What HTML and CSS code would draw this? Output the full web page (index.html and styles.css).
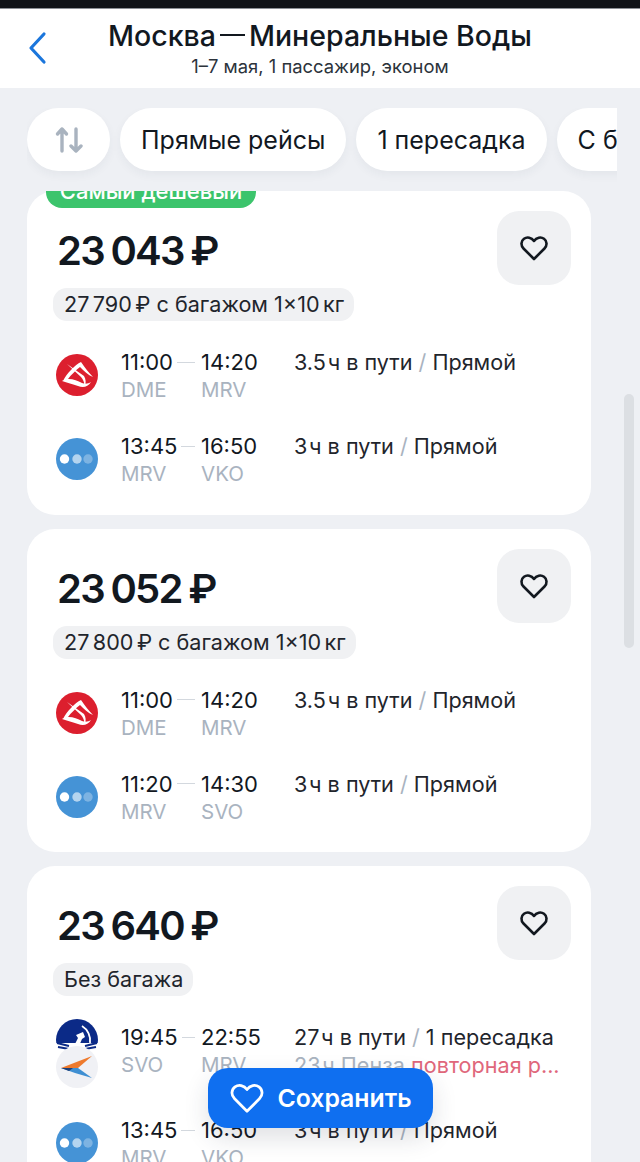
FILE: index.html
```html
<!DOCTYPE html>
<html lang="ru">
<head>
  <meta charset="UTF-8" />
  <meta name="viewport" content="width=device-width, initial-scale=1.0" />
  <title>Москва — Минеральные Воды</title>
  <link rel="stylesheet" href="styles.css">
</head>
<body>
  <div class="topbar"></div>
  <header class="header">
    <svg class="back" width="22" height="34" viewBox="0 0 22 34"><path d="M17 3 L4 17 L17 31" fill="none" stroke="#1b76dc" stroke-width="3.2" stroke-linecap="round" stroke-linejoin="round"/></svg>
    <div class="title"><span>Москва</span><i class="title-dash"></i><span>Минеральные Воды</span></div>
    <div class="subtitle">1–7 мая, 1 пассажир, эконом</div>
  </header>

  <div class="filters">
    <div class="chip chip-sort">
      <svg width="28" height="28" viewBox="0 0 28 28" fill="none" stroke="#a9b3bf" stroke-width="3.4" stroke-linecap="round" stroke-linejoin="round"><path d="M7 25V3M2.500 8 7 3l4.500 5"/><path d="M21 3v22M16 20l5 5 5-5"/></svg>
    </div>
    <div class="chip">Прямые рейсы</div>
    <div class="chip">1 пересадка</div>
    <div class="chip">С багажом</div>
  </div>

  <main class="list">
    <section class="card">
      <div class="badge">Самый дешевый</div>
      <div class="price">23<i class="thin"></i>043<i class="thin"></i>₽</div>
      <button class="fav"><svg width="30" height="28" viewBox="0 0 30 28"><path d="M15 25 4.500 14.500C1.500 11.500 2 7 5 4.800 8 2.600 12.500 3.300 15 7c2.500-3.700 7-4.400 10-2.200 3 2.200 3.500 6.700.5 9.700Z" fill="none" stroke="#12181f" stroke-width="2.600" stroke-linejoin="round"/></svg></button>
      <div class="baggage">27<i class="thin"></i>790<i class="thin"></i>₽ с багажом 1×10<i class="thin"></i>кг</div>
      <div class="flight">
        <svg class="logo" viewBox="0 0 42 42"><circle cx="21" cy="21" r="21" fill="#dc1f2e"/><path d="M7 27C11 19 19 11 25 8c4 6 8 11 12 15-5-2-9-6-13-10-4 3-9 8-12 12ZM6 27c6-4 14-1 20 2 3 1 6 1 9-1-3 5-8 6-13 4-5-2-11-3-16-5ZM11 10l17 12c2 3 2 7 1 10-1-4-2-7-4-9Z" fill="#fff"/></svg>
        <div class="leg"><div class="time">11:00<i class="dash"></i></div><div class="code">DME</div></div>
        <div class="leg"><div class="time">14:20</div><div class="code">MRV</div></div>
        <div class="info">3.5<i class="thin"></i>ч в пути <span class="slash">/</span> Прямой</div>
      </div>
      <div class="flight">
        <svg class="logo" viewBox="0 0 42 42"><circle cx="21" cy="21" r="21" fill="#4593d6"/><circle cx="8.500" cy="21" r="4.700" fill="#fff"/><circle cx="21" cy="21" r="4.700" fill="#fff" fill-opacity=".6"/><circle cx="32" cy="21" r="4.700" fill="#fff" fill-opacity=".3"/></svg>
        <div class="leg"><div class="time">13:45<i class="dash"></i></div><div class="code">MRV</div></div>
        <div class="leg"><div class="time">16:50</div><div class="code">VKO</div></div>
        <div class="info">3<i class="thin"></i>ч в пути <span class="slash">/</span> Прямой</div>
      </div>
    </section>

    <section class="card">
      <div class="price">23<i class="thin"></i>052<i class="thin"></i>₽</div>
      <button class="fav"><svg width="30" height="28" viewBox="0 0 30 28"><path d="M15 25 4.500 14.500C1.500 11.500 2 7 5 4.800 8 2.600 12.500 3.300 15 7c2.500-3.700 7-4.400 10-2.200 3 2.200 3.500 6.700.5 9.700Z" fill="none" stroke="#12181f" stroke-width="2.600" stroke-linejoin="round"/></svg></button>
      <div class="baggage">27<i class="thin"></i>800<i class="thin"></i>₽ с багажом 1×10<i class="thin"></i>кг</div>
      <div class="flight">
        <svg class="logo" viewBox="0 0 42 42"><circle cx="21" cy="21" r="21" fill="#dc1f2e"/><path d="M7 27C11 19 19 11 25 8c4 6 8 11 12 15-5-2-9-6-13-10-4 3-9 8-12 12ZM6 27c6-4 14-1 20 2 3 1 6 1 9-1-3 5-8 6-13 4-5-2-11-3-16-5ZM11 10l17 12c2 3 2 7 1 10-1-4-2-7-4-9Z" fill="#fff"/></svg>
        <div class="leg"><div class="time">11:00<i class="dash"></i></div><div class="code">DME</div></div>
        <div class="leg"><div class="time">14:20</div><div class="code">MRV</div></div>
        <div class="info">3.5<i class="thin"></i>ч в пути <span class="slash">/</span> Прямой</div>
      </div>
      <div class="flight">
        <svg class="logo" viewBox="0 0 42 42"><circle cx="21" cy="21" r="21" fill="#4593d6"/><circle cx="8.500" cy="21" r="4.700" fill="#fff"/><circle cx="21" cy="21" r="4.700" fill="#fff" fill-opacity=".6"/><circle cx="32" cy="21" r="4.700" fill="#fff" fill-opacity=".3"/></svg>
        <div class="leg"><div class="time">11:20<i class="dash"></i></div><div class="code">MRV</div></div>
        <div class="leg"><div class="time">14:30</div><div class="code">SVO</div></div>
        <div class="info">3<i class="thin"></i>ч в пути <span class="slash">/</span> Прямой</div>
      </div>
    </section>

    <section class="card">
      <div class="price">23<i class="thin"></i>640<i class="thin"></i>₽</div>
      <button class="fav"><svg width="30" height="28" viewBox="0 0 30 28"><path d="M15 25 4.500 14.500C1.500 11.500 2 7 5 4.800 8 2.600 12.500 3.300 15 7c2.500-3.700 7-4.400 10-2.200 3 2.200 3.500 6.700.5 9.700Z" fill="none" stroke="#12181f" stroke-width="2.600" stroke-linejoin="round"/></svg></button>
      <div class="baggage">Без багажа</div>
      <div class="flight flight-double">
        <div class="logos">
          <svg class="logo" viewBox="0 0 42 42"><circle cx="21" cy="21" r="21" fill="#0b2a87"/><path d="M0 24h42v18H0Z" fill="#fff"/><path d="M1 24l12 3M2 28l11 2M41 24l-12 3M40 28l-11 2" stroke="#0b2a87" stroke-width="2"/><path d="M26 7a17 17 0 0 1 8 17" fill="none" stroke="#fff" stroke-width="1.800"/><path d="M27 13l-7 3 2 3-4 8h5l3-7 3-2Z" fill="#fff"/></svg>
          <svg class="logo logo-over" viewBox="0 0 42 42"><circle cx="21" cy="21" r="21" fill="#f0f1f5"/><path d="M5 22 36 10 22 22Z" fill="#ee7a2d"/><path d="M5 22h17l14 10-17-5Z" fill="#3f8fd2"/><path d="M5 22h12l-4 3Z" fill="#1d3f78"/></svg>
        </div>
        <div class="leg"><div class="time">19:45<i class="dash"></i></div><div class="code">SVO</div></div>
        <div class="leg"><div class="time">22:55</div><div class="code">MRV</div></div>
        <div class="info-wrap">
          <div class="info">27<i class="thin"></i>ч в пути <span class="slash">/</span> 1 пересадка</div>
          <div class="stop">23<i class="thin"></i>ч Пенза <span class="warn">повторная р...</span></div>
        </div>
      </div>
      <div class="flight">
        <svg class="logo" viewBox="0 0 42 42"><circle cx="21" cy="21" r="21" fill="#4593d6"/><circle cx="8.500" cy="21" r="4.700" fill="#fff"/><circle cx="21" cy="21" r="4.700" fill="#fff" fill-opacity=".6"/><circle cx="32" cy="21" r="4.700" fill="#fff" fill-opacity=".3"/></svg>
        <div class="leg"><div class="time">13:45<i class="dash"></i></div><div class="code">MRV</div></div>
        <div class="leg"><div class="time">16:50</div><div class="code">VKO</div></div>
        <div class="info">3<i class="thin"></i>ч в пути <span class="slash">/</span> Прямой</div>
      </div>
    </section>
  </main>

  <div class="scrollbar"></div>

  <button class="save">
    <svg width="36" height="34" viewBox="0 0 30 28"><path d="M15 25 4.500 14.500C1.500 11.500 2 7 5 4.800 8 2.600 12.500 3.300 15 7c2.500-3.700 7-4.400 10-2.200 3 2.200 3.500 6.700.5 9.700Z" fill="none" stroke="#fff" stroke-width="2.300" stroke-linejoin="round"/></svg>
    Сохранить
  </button>
</body>
</html>
```

FILE: styles.css
```css
body {
  font-family: Inter, "Noto Sans", sans-serif;
  background-color: #eef0f4;
  color: #12181f;
  margin: 0;
  height: 1162px;
  overflow: hidden;
  position: relative;
  display: flex;
  flex-direction: column;
}
.topbar {
  height: 8px;
  background-color: #101318;
  border-bottom: 1px solid #8c9096;
  flex: none;
}
.header {
  height: 79px;
  background-color: #fff;
  position: relative;
  text-align: center;
  flex: none;
}
.back {
  position: absolute;
  left: 27px;
  top: 22px;
}
.title {
  font-size: 28.5px;
  line-height: 34px;
  font-weight: 500;
  padding-top: 10px;
  display: flex;
  justify-content: center;
  align-items: center;
}
.title-dash {
  width: 25px;
  height: 1.5px;
  background-color: #12181f;
  margin: 0 4px 2px;
}
.subtitle {
  font-size: 18.4px;
  line-height: 22px;
  color: #2c333b;
  margin-top: 2px;
}
.filters {
  display: flex;
  gap: 10px;
  margin: 20px 23px 0 27px;
  padding-bottom: 20px;
  overflow: hidden;
  flex: none;
}
.chip {
  height: 63px;
  padding: 0 21px;
  border-radius: 32px;
  background-color: #fff;
  font-size: 25px;
  display: flex;
  align-items: center;
  white-space: nowrap;
  flex: none;
  box-shadow: 0 4px 10px rgba(40, 50, 70, 0.05);
}
.chip-sort {
  width: 83px;
  box-sizing: border-box;
  padding: 0;
  justify-content: center;
}
.list {
  flex: 1;
  overflow: hidden;
  padding: 0 49px 0 27px;
  display: flex;
  flex-direction: column;
  gap: 14px;
}
.card {
  background-color: #fff;
  border-radius: 28px;
  padding: 37px 30px 0 30px;
  position: relative;
  height: 286.5px;
  flex: none;
}
.badge {
  position: absolute;
  left: 19px;
  top: -14px;
  height: 31px;
  width: 210px;
  background-color: #3cc46c;
  color: #fff;
  font-size: 22px;
  font-weight: 500;
  line-height: 28px;
  text-align: center;
  border-radius: 0 0 16px 16px;
}
.price {
  font-size: 40px;
  line-height: 46px;
  font-weight: 600;
  letter-spacing: -1.7px;
}
.thin {
  display: inline-block;
  width: 0.16em;
}
.fav {
  position: absolute;
  right: 20px;
  top: 20px;
  width: 74px;
  height: 74px;
  border: none;
  padding: 0;
  background-color: #f0f1f3;
  border-radius: 22px;
  display: flex;
  align-items: center;
  justify-content: center;
}
.baggage {
  display: inline-block;
  margin: 14px 0 0 -4px;
  padding: 0 10px 0 11px;
  height: 33px;
  line-height: 33px;
  border-radius: 14px;
  background-color: #f0f1f3;
  font-size: 21.6px;
  color: #1f252c;
}
.flight {
  display: flex;
  margin-top: 27px;
  height: 60px;
  font-size: 22px;
}
.flight + .flight {
  margin-top: 24px;
}
.flight-double + .flight {
  margin-top: 33px;
}
.logo {
  width: 42px;
  height: 42px;
  margin: 6px 23px 0 -1px;
  flex: none;
}
.logos {
  width: 65px;
  margin-left: -1px;
  flex: none;
  position: relative;
}
.logos .logo {
  display: block;
  margin: 0;
  position: absolute;
  left: 0;
  top: -4px;
}
.logos .logo-over {
  top: 23px;
}
.leg {
  width: 80px;
  flex: none;
}
.time {
  line-height: 28px;
  display: flex;
  align-items: center;
}
.dash {
  flex: 1;
  height: 1px;
  background-color: #d3d8de;
  margin: 0 6px 0 4px;
}
.code {
  line-height: 28px;
  font-size: 20.5px;
  color: #a9b3bf;
}
.info {
  line-height: 28px;
  font-size: 21.6px;
  margin-left: 13px;
  color: #1f252c;
  white-space: nowrap;
}
.stop {
  line-height: 28px;
  font-size: 21.6px;
  margin-left: 13px;
  color: #a9b3bf;
  white-space: nowrap;
}
.info .thin,
.stop .thin {
  width: 0.08em;
}
.slash {
  color: #a9b3bf;
}
.warn {
  color: #e0677b;
}
.scrollbar {
  position: absolute;
  left: 624px;
  top: 394px;
  width: 10px;
  height: 254px;
  border-radius: 5px;
  background-color: #dcdfe3;
}
.save {
  position: absolute;
  left: 208px;
  top: 1068px;
  width: 225px;
  height: 60px;
  border: none;
  border-radius: 20px;
  background-color: #0f6ff0;
  color: #fff;
  font-family: inherit;
  font-size: 24.8px;
  font-weight: 600;
  display: flex;
  align-items: center;
  justify-content: center;
  gap: 12px;
  padding: 0;
  box-shadow: 0 10px 24px rgba(40, 50, 70, 0.15);
}
```
